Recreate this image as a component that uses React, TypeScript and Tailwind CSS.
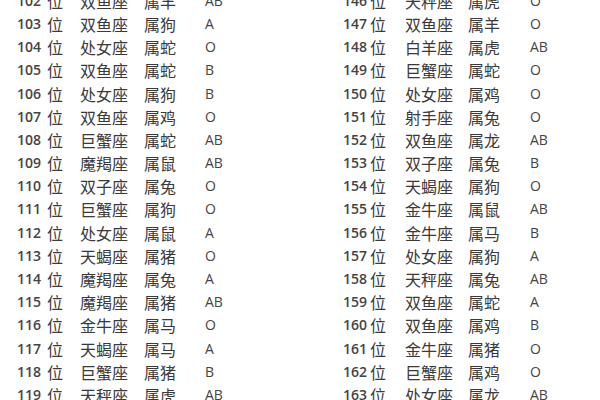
const left = [
  ["102", "双鱼座", "属羊", "AB"],
  ["103", "双鱼座", "属狗", "A"],
  ["104", "处女座", "属蛇", "O"],
  ["105", "双鱼座", "属蛇", "B"],
  ["106", "处女座", "属狗", "B"],
  ["107", "双鱼座", "属鸡", "O"],
  ["108", "巨蟹座", "属蛇", "AB"],
  ["109", "魔羯座", "属鼠", "AB"],
  ["110", "双子座", "属兔", "O"],
  ["111", "巨蟹座", "属狗", "O"],
  ["112", "处女座", "属鼠", "A"],
  ["113", "天蝎座", "属猪", "O"],
  ["114", "魔羯座", "属兔", "A"],
  ["115", "魔羯座", "属猪", "AB"],
  ["116", "金牛座", "属马", "O"],
  ["117", "天蝎座", "属马", "A"],
  ["118", "巨蟹座", "属猪", "B"],
  ["119", "天秤座", "属虎", "AB"],
];

const right = [
  ["146", "天秤座", "属虎", "O"],
  ["147", "双鱼座", "属羊", "O"],
  ["148", "白羊座", "属虎", "AB"],
  ["149", "巨蟹座", "属蛇", "O"],
  ["150", "处女座", "属鸡", "O"],
  ["151", "射手座", "属兔", "O"],
  ["152", "双鱼座", "属龙", "AB"],
  ["153", "双子座", "属兔", "B"],
  ["154", "天蝎座", "属狗", "O"],
  ["155", "金牛座", "属鼠", "AB"],
  ["156", "金牛座", "属马", "B"],
  ["157", "处女座", "属狗", "A"],
  ["158", "天秤座", "属兔", "AB"],
  ["159", "双鱼座", "属蛇", "A"],
  ["160", "双鱼座", "属鸡", "B"],
  ["161", "金牛座", "属猪", "O"],
  ["162", "巨蟹座", "属鸡", "O"],
  ["163", "处女座", "属龙", "AB"],
];

const cjk = "font-['Noto_Sans_CJK_SC',sans-serif] text-[16px] text-[#3a3a3a]";
const latin = "font-['Open_Sans','Liberation_Sans',sans-serif]";

const Rows = ({ rows, widths }: { rows: string[][]; widths: string[] }) => (
  <div className="flex flex-col">
    {rows.map((r) => (
      <div key={r[0]} className="flex items-center h-[23.2px] leading-none">
        <span className={`${latin} ${widths[0]} text-[14px] font-semibold text-[#444]`}>{r[0]}</span>
        <span className={`${cjk} ${widths[1]}`}>位</span>
        <span className={`${cjk} ${widths[2]}`}>{r[1]}</span>
        <span className={`${cjk} ${widths[3]}`}>{r[2]}</span>
        <span className={`${latin} text-[14px] text-[#444]`}>{r[3]}</span>
      </div>
    ))}
  </div>
);

export default function App() {
  return (
    <div className="w-[600px] h-[400px] overflow-hidden bg-white">
      <div className="flex -mt-[10.8px]">
        <div className="w-[300px] pl-[17px]">
          <Rows rows={left} widths={["w-[30px]", "w-[33px]", "w-[64px]", "w-[61px]"]} />
        </div>
        <div className="w-[300px] pl-[43px]">
          <Rows rows={right} widths={["w-[27px]", "w-[35px]", "w-[63px]", "w-[62px]"]} />
        </div>
      </div>
    </div>
  );
}
